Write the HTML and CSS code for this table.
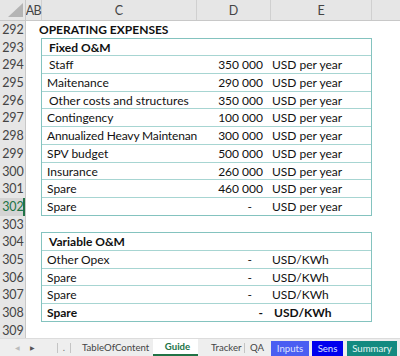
FILE: index.html
```html
<!DOCTYPE html>
<html>
<head>
<meta charset="utf-8">
<link rel="stylesheet" href="styles.css">
</head>
<body>
<div class="app">
  <div class="colhead">
    <div class="corner"><span class="tri"></span></div>
    <div class="ch ch-a">A</div>
    <div class="ch ch-b">B</div>
    <div class="ch ch-c">C</div>
    <div class="ch ch-d">D</div>
    <div class="ch ch-e">E</div>
    <div class="ch ch-f"></div>
  </div>
  <div class="grid">
    <div class="rownums">
      <div class="rn">292</div><div class="rn">293</div><div class="rn">294</div><div class="rn">295</div>
      <div class="rn">296</div><div class="rn">297</div><div class="rn">298</div><div class="rn">299</div>
      <div class="rn">300</div><div class="rn">301</div><div class="rn sel">302</div><div class="rn">303</div>
      <div class="rn">304</div><div class="rn">305</div><div class="rn">306</div><div class="rn">307</div>
      <div class="rn">308</div><div class="rn">309</div>
    </div>
    <div class="cells">
      <div class="row title">OPERATING EXPENSES</div>
      <div class="box">
        <div class="row r head"><span class="c">Fixed O&amp;M</span><span class="d"></span><span class="e"></span></div>
        <div class="row r"><span class="c sp"> Staff</span><span class="d">350 000</span><span class="e">USD per year</span></div>
        <div class="row r"><span class="c">Maitenance</span><span class="d">290 000</span><span class="e">USD per year</span></div>
        <div class="row r"><span class="c sp"> Other costs and structures</span><span class="d">350 000</span><span class="e">USD per year</span></div>
        <div class="row r"><span class="c">Contingency</span><span class="d">100 000</span><span class="e">USD per year</span></div>
        <div class="row r"><span class="c tight">Annualized Heavy Maintenan</span><span class="d">300 000</span><span class="e">USD per year</span></div>
        <div class="row r"><span class="c">SPV budget</span><span class="d">500 000</span><span class="e">USD per year</span></div>
        <div class="row r"><span class="c">Insurance</span><span class="d">260 000</span><span class="e">USD per year</span></div>
        <div class="row r"><span class="c">Spare</span><span class="d">460 000</span><span class="e">USD per year</span></div>
        <div class="row r last"><span class="c">Spare</span><span class="d dash">-</span><span class="e">USD per year</span></div>
      </div>
      <div class="row"></div>
      <div class="box">
        <div class="row r head"><span class="c">Variable O&amp;M</span><span class="d"></span><span class="e"></span></div>
        <div class="row r"><span class="c">Other Opex</span><span class="d dash">-</span><span class="e">USD/KWh</span></div>
        <div class="row r"><span class="c">Spare</span><span class="d dash">-</span><span class="e">USD/KWh</span></div>
        <div class="row r"><span class="c">Spare</span><span class="d dash">-</span><span class="e">USD/KWh</span></div>
        <div class="row r last strong"><span class="c">Spare</span><span class="d dash2">-</span><span class="e e2">USD/KWh</span></div>
      </div>
      <div class="row"></div>
    </div>
  </div>
  <div class="tabs">
    <span class="nav dis">&#9664;</span>
    <span class="nav">&#9654;</span>
    <span class="sepv s1"></span>
    <span class="more">.</span>
    <span class="sepv s2"></span>
    <span class="tab t-toc">TableOfContent</span>
    <span class="tab active">Guide</span>
    <span class="tab t-tracker">Tracker</span>
    <span class="sepv s3"></span>
    <span class="tab t-qa">QA</span>
    <span class="tab colored inputs">Inputs</span>
    <span class="tab colored sens">Sens</span>
    <span class="tab colored summary">Summary</span>
  </div>
</div>
</body>
</html>
```
FILE: styles.css
```css
* { box-sizing: border-box; }
html, body { margin: 0; padding: 0; background: #fff; }
body { font-family: Lato, "Open Sans", sans-serif; font-size: 12px; color: #111; }
.app { width: 400px; height: 356px; display: flex; flex-direction: column; overflow: hidden; }

.colhead { height: 21px; flex: none; display: flex; background: #e6e6e6; border-bottom: 1px solid #c8c8c8; color: #444; font-size: 12.5px; }
.corner { width: 26px; position: relative; border-right: 1px solid #c8c8c8; }
.tri { position: absolute; right: 2px; bottom: 3px; width: 0; height: 0; border-left: 15px solid transparent; border-bottom: 14px solid #b4b4b4; }
.ch { display: flex; align-items: center; justify-content: center; border-right: 1px solid #d0d0d0; }
.ch-a { width: 8px; border-right: none; }
.ch-b { width: 8px; }
.ch-c { width: 155px; }
.ch-d { width: 74px; }
.ch-e { width: 101px; }
.ch-f { flex: 1; border-right: none; }

.grid { flex: 1; display: flex; overflow: hidden; }
.rownums { width: 26px; flex: none; background: #e6e6e6; border-right: 1px solid #c8c8c8; }
.rn { height: 17.7px; line-height: 17.7px; text-align: center; color: #444; font-size: 12.5px; padding-left: 1px; }
.rn.sel { color: #217346; background: #d4d4d4; box-shadow: inset -2px 0 0 #217346; }
.cells { flex: 1; }
.row { height: 17.7px; line-height: 17.7px; white-space: nowrap; }
.title { padding-left: 13px; font-weight: bold; }
.box { margin-left: 15px; width: 331px; border: 1px solid #84c3bf; border-top: none; position: relative; }
.box::before { content: ""; position: absolute; left: -1px; right: -1px; top: -1px; height: 1px; background: #84c3bf; }
.r { display: grid; grid-template-columns: 154px 74px 101px; border-bottom: 1px solid #a7d5d2; }
.r.last { border-bottom: none; height: 16.7px; }
.c { padding-left: 5px; overflow: visible; }
.c.tight { letter-spacing: -0.15px; }
.c.sp { padding-left: 7px; }
.head .c { padding-left: 7px; font-weight: bold; }
.d { text-align: right; padding-right: 7px; }
.d.dash { padding-right: 18px; }
.e { padding-left: 2px; }
.strong { font-weight: bold; }
.d.dash2 { padding-right: 7px; }
.e.e2 { padding-left: 4px; }

.tabs { height: 18px; flex: none; background: #eeeeee; border-top: 1px solid #dcdcdc; display: flex; align-items: stretch; font-size: 9.6px; color: #444; }
.nav { width: 15px; font-size: 6px; display: flex; align-items: center; justify-content: center; color: #555; }
.nav.dis { margin-left: 10px; color: #bbb; }
.sepv { width: 1px; background: #c4c4c4; margin: 4px 0 3px 0; flex: none; }
.sepv.s1 { margin-left: 17px; }
.more { width: 12px; display: flex; align-items: center; justify-content: center; color: #777; }
.tab { display: flex; align-items: center; flex: none; }
.t-toc { width: 82px; padding-left: 11px; }
.active { width: 45px; justify-content: center; background: #fff; color: #217346; font-weight: bold; border-bottom: 2px solid #217346; padding-left: 4px; }
.t-tracker { width: 46px; padding-left: 13px; }
.t-qa { width: 26px; padding-left: 5px; }
.colored { color: #dfe3ff; margin-top: 2px; justify-content: center; }
.inputs { background: #4a5ef2; width: 38px; }
.sens { background: #0000ee; width: 31px; margin-left: 3px; }
.summary { background: #138a80; color: #e6f6f4; width: 50px; margin-left: 4px; }
```
